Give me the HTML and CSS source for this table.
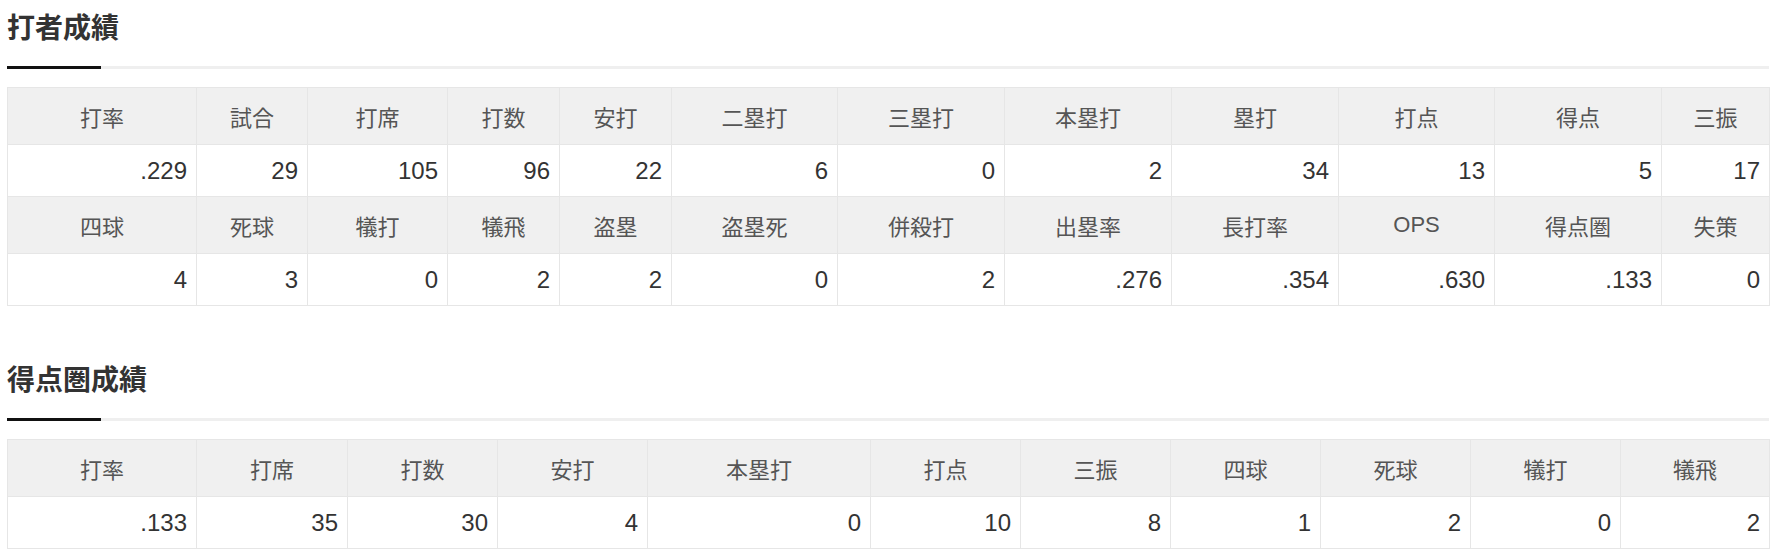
FILE: index.html
```html
<!DOCTYPE html>
<html lang="ja">
<head>
<meta charset="utf-8">
<title>打者成績</title>
<link rel="stylesheet" href="styles.css">
</head>
<body>
<div class="page">
  <section class="block">
    <h2 class="heading">打者成績</h2>
    <table class="stats">
      <colgroup>
        <col class="w189"><col class="w111"><col class="w140"><col class="w112"><col class="w112"><col class="w166"><col class="w167"><col class="w167"><col class="w167"><col class="w156"><col class="w167"><col class="w108">
      </colgroup>
      <tr class="head"><th>打率</th><th>試合</th><th>打席</th><th>打数</th><th>安打</th><th>二塁打</th><th>三塁打</th><th>本塁打</th><th>塁打</th><th>打点</th><th>得点</th><th>三振</th></tr>
      <tr class="data"><td>.229</td><td>29</td><td>105</td><td>96</td><td>22</td><td>6</td><td>0</td><td>2</td><td>34</td><td>13</td><td>5</td><td>17</td></tr>
      <tr class="head"><th>四球</th><th>死球</th><th>犠打</th><th>犠飛</th><th>盗塁</th><th>盗塁死</th><th>併殺打</th><th>出塁率</th><th>長打率</th><th>OPS</th><th>得点圏</th><th>失策</th></tr>
      <tr class="data"><td>4</td><td>3</td><td>0</td><td>2</td><td>2</td><td>0</td><td>2</td><td>.276</td><td>.354</td><td>.630</td><td>.133</td><td>0</td></tr>
    </table>
  </section>
  <section class="block">
    <h2 class="heading">得点圏成績</h2>
    <table class="stats">
      <colgroup>
        <col class="w189"><col class="w151"><col class="w150"><col class="w150"><col class="w223"><col class="w150"><col class="w150"><col class="w150"><col class="w150"><col class="w150"><col class="w149">
      </colgroup>
      <tr class="head"><th>打率</th><th>打席</th><th>打数</th><th>安打</th><th>本塁打</th><th>打点</th><th>三振</th><th>四球</th><th>死球</th><th>犠打</th><th>犠飛</th></tr>
      <tr class="data"><td>.133</td><td>35</td><td>30</td><td>4</td><td>0</td><td>10</td><td>8</td><td>1</td><td>2</td><td>0</td><td>2</td></tr>
    </table>
  </section>
</div>
</body>
</html>
```

FILE: styles.css
```css
html, body {
  margin: 0;
  padding: 0;
  background: #fff;
}

.page {
  padding: 0 10px 0 7px;
  font-family: "Liberation Sans", "Noto Sans CJK JP", sans-serif;
  color: #333;
}

.block {
  margin-bottom: 46px;
}

.block:last-child {
  margin-bottom: 0;
}

.heading {
  position: relative;
  margin: 0;
  padding: 6px 0 20px;
  font-family: "Noto Sans CJK JP", sans-serif;
  font-size: 28px;
  line-height: 40px;
  font-weight: 700;
  color: #333;
  border-bottom: 3px solid #efefef;
}

.heading::after {
  content: "";
  position: absolute;
  left: 0;
  bottom: -3px;
  width: 94px;
  height: 3px;
  background: #111;
}

.stats {
  width: 100%;
  margin-top: 18px;
  border-collapse: collapse;
  table-layout: fixed;
  border: 1px solid #e3e3e3;
}

.stats th,
.stats td {
  border: 1px solid #e6e6e6;
  padding: 0 9px;
  vertical-align: middle;
}

.stats th {
  background: #f0f0f0;
  font-family: "Liberation Sans", "Noto Sans CJK JP", sans-serif;
  font-size: 22px;
  font-weight: 400;
  color: #555;
  text-align: center;
}

.stats td {
  font-size: 24px;
  color: #333;
  text-align: right;
}

.stats .head { height: 57px; }
.stats .data { height: 52px; }

.w108 { width: 108px; }
.w111 { width: 111px; }
.w112 { width: 112px; }
.w140 { width: 140px; }
.w149 { width: 149px; }
.w150 { width: 150px; }
.w151 { width: 151px; }
.w156 { width: 156px; }
.w166 { width: 166px; }
.w167 { width: 167px; }
.w189 { width: 189px; }
.w223 { width: 223px; }
```
